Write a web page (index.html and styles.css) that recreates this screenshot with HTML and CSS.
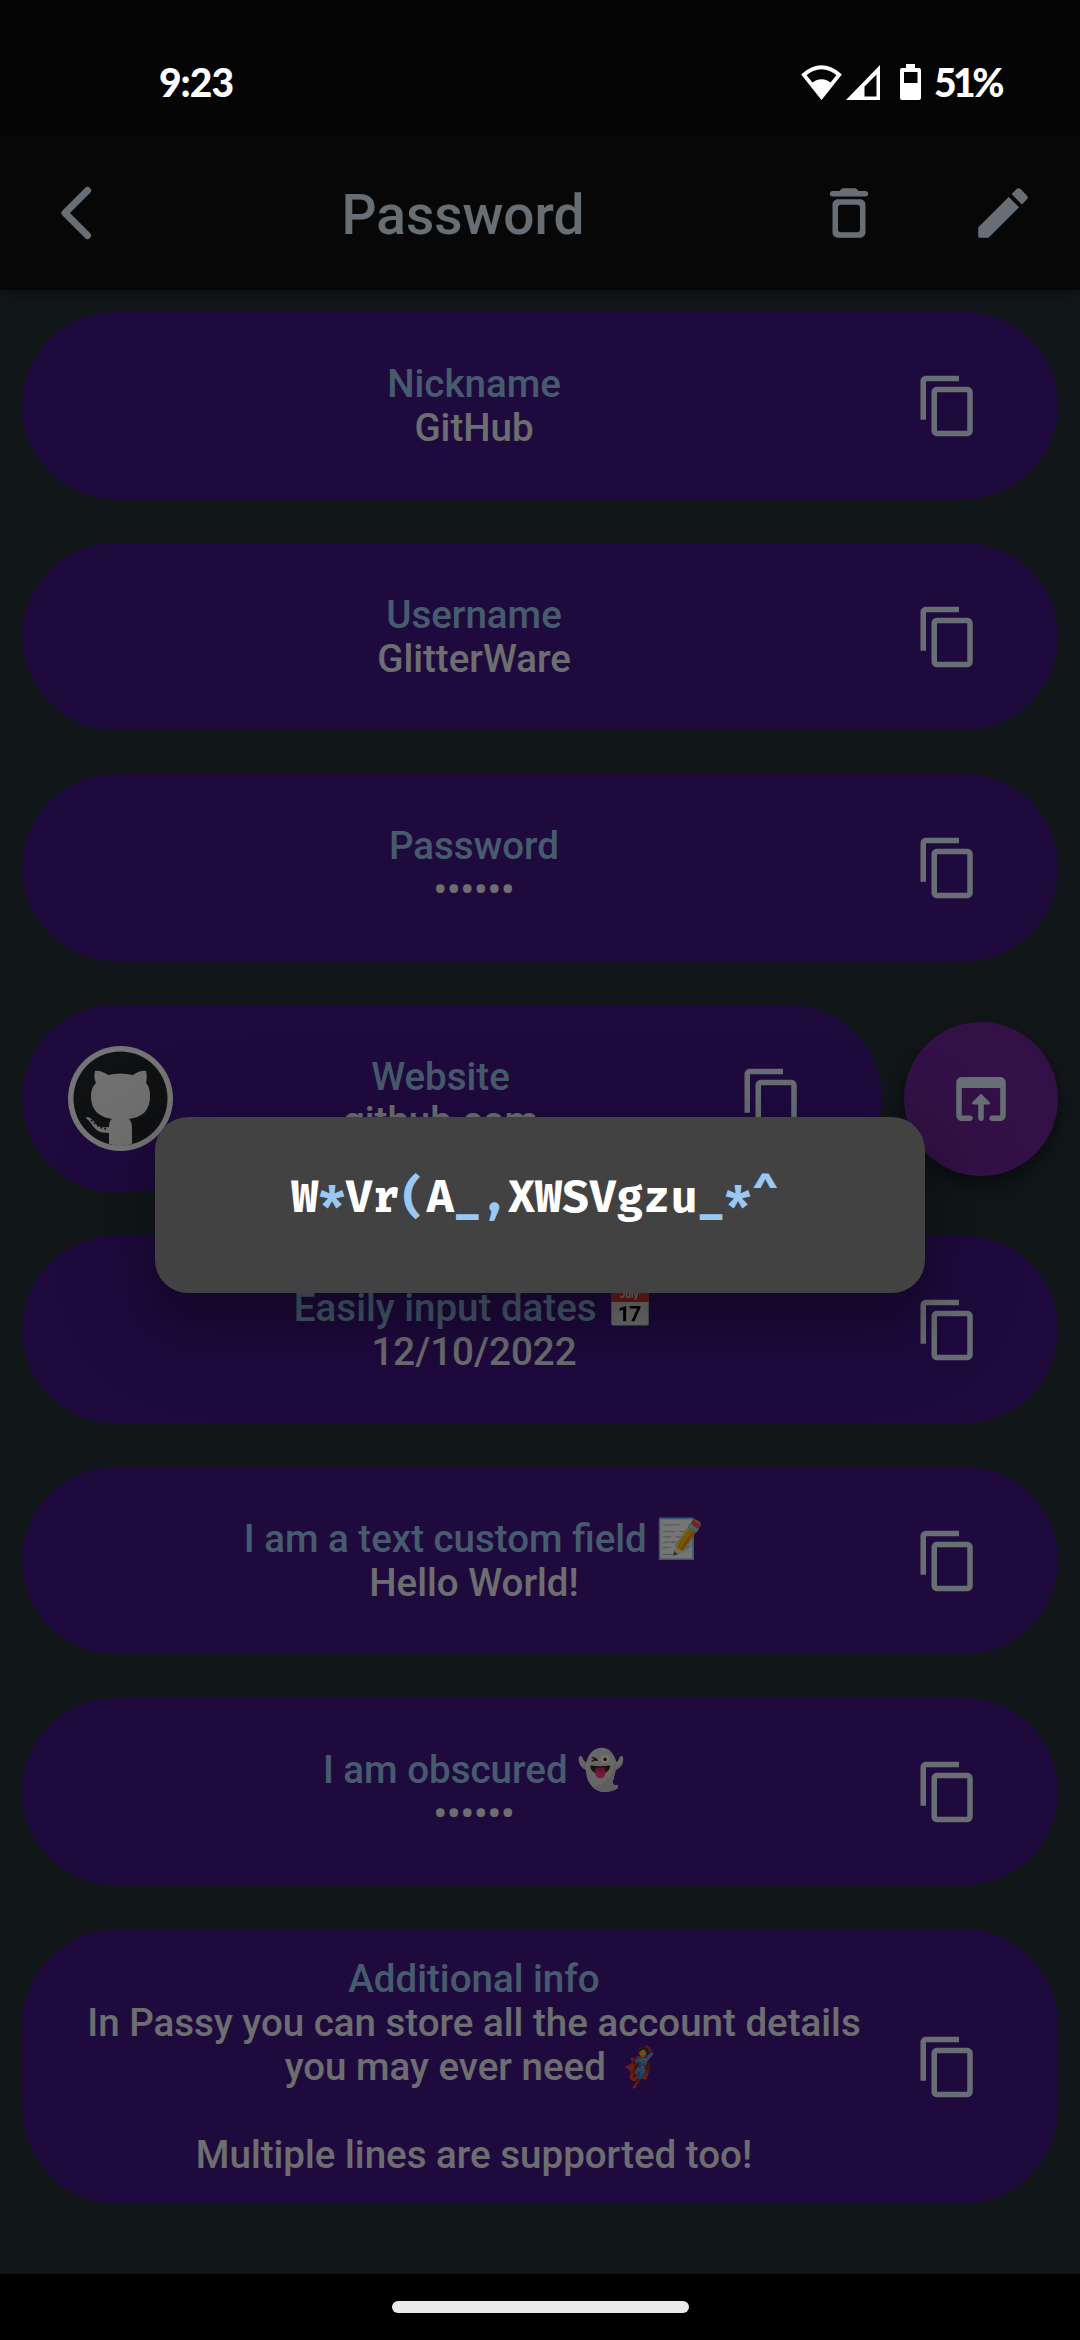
FILE: index.html
```html
<!DOCTYPE html>
<html lang="en">
<head>
<meta charset="utf-8">
<title>Password</title>
<link rel="stylesheet" href="styles.css">
</head>
<body>
<svg class="defs" aria-hidden="true">
  <symbol id="copy" viewBox="0 0 24 24"><path d="M16 1H4c-1.1 0-2 .9-2 2v14h2V3h12V1zm3 4H8c-1.1 0-2 .9-2 2v14c0 1.1.9 2 2 2h11c1.1 0 2-.9 2-2V7c0-1.1-.9-2-2-2zm0 16H8V7h11v14z"/></symbol>
</svg>
<div class="screen">
  <header class="status">
    <span class="clock">9:23</span>
    <span class="indicators">
      <svg class="wifi" viewBox="0 0 41 35"><path d="M2.8 9.8Q20.500-5.200 38.200 9.800L20.500 32Z" fill="none" stroke="#fff" stroke-width="3.800"/><path d="M10 18.500Q20.500 10 31 18.500L20.500 33Z" fill="#fff"/></svg>
      <svg class="signal" viewBox="0 0 34 35"><path fill-rule="evenodd" d="M34 0V35H0ZM30.500 9.500L18.500 21.500V31.500H30.500Z" fill="#fff"/></svg>
      <svg class="battery" viewBox="0 0 21 36"><path fill-rule="evenodd" d="M6 0h9v4h4a2 2 0 0 1 2 2v28a2 2 0 0 1-2 2H2a2 2 0 0 1-2-2V6a2 2 0 0 1 2-2h4zM4 8v11h13.500V8z" fill="#fff"/></svg>
      <span class="percent">51%</span>
    </span>
  </header>
  <nav class="appbar">
    <svg class="icon back" viewBox="0 0 66 66"><path d="M43.500 10.500L21 33l22.500 22.500" fill="none" stroke="currentColor" stroke-width="7" stroke-linecap="round" stroke-linejoin="round"/></svg>
    <h1 class="title">Password</h1>
    <div class="actions">
      <span class="action"><svg class="icon" viewBox="0 0 24 24"><path d="M6 19c0 1.100.9 2 2 2h8c1.100 0 2-.9 2-2V9c0-1.100-.9-2-2-2H8c-1.100 0-2 .9-2 2v10zm3-10h6c.55 0 1 .45 1 1v8c0 .55-.45 1-1 1H9c-.55 0-1-.45-1-1v-8c0-.55.45-1 1-1zm6.500-5l-.71-.71c-.18-.18-.44-.29-.7-.29H9.910c-.26 0-.52.11-.7.290L8.500 4H6c-.55 0-1 .45-1 1s.45 1 1 1h12c.55 0 1-.45 1-1s-.45-1-1-1h-2.500z"/></svg></span>
      <span class="action"><svg class="icon" viewBox="0 0 24 24"><path d="M3 17.460v3.040c0 .28.22.5.5.5h3.040c.13 0 .26-.05.35-.15L17.810 9.940l-3.750-3.750L3.150 17.100c-.1.100-.15.220-.15.360zM20.710 7.040c.39-.39.39-1.020 0-1.410l-2.340-2.340c-.39-.39-1.020-.39-1.410 0l-1.830 1.830 3.750 3.750 1.830-1.830z"/></svg></span>
    </div>
  </nav>
  <main class="list">
    <section class="card"><div class="text"><span class="label">Nickname</span><span>GitHub</span></div><span class="button"><svg class="icon"><use href="#copy"/></svg></span></section>
    <section class="card"><div class="text"><span class="label">Username</span><span>GlitterWare</span></div><span class="button"><svg class="icon"><use href="#copy"/></svg></span></section>
    <section class="card"><div class="text"><span class="label">Password</span><span>••••••</span></div><span class="button"><svg class="icon"><use href="#copy"/></svg></span></section>
    <div class="row">
      <section class="card">
        <svg class="favicon" viewBox="0 0 105 105">
          <circle cx="52.500" cy="52.500" r="52.500" fill="#fff"/>
          <circle cx="52.500" cy="52.500" r="47" fill="#22262a"/>
          <path fill="#f4f4f4" d="M41 98V87C31 87 27 84 23 77C21 74 18 73 18 71C23 70 26 76 30 80C34 82 38 81 41 81C41 77 42 74 44 73C32 71 23 65 23 50C23 44 25 40 28 37C26 33 26 29 27 25C31 24 37 27 40 29Q52.500 26 65 29C69 26 74 24 78 25C79 29 79 33 78 37C81 40 82 45 82 50C82 65 74 71 61 73C63 75 64 78 64 82V98Q52.500 102 41 98Z"/>
          <path d="M23 74Q31 83 40 83" fill="none" stroke="#22262a" stroke-width="1.500" stroke-dasharray="2 2"/>
        </svg>
        <div class="text"><span class="label">Website</span><span>github.com</span></div>
        <span class="button"><svg class="icon"><use href="#copy"/></svg></span>
      </section>
      <span class="fab"><svg class="icon" viewBox="0 0 24 24"><path d="M19 4H5c-1.110 0-2 .9-2 2v12c0 1.100.89 2 2 2h3c.55 0 1-.45 1-1s-.45-1-1-1H5V8h14v10h-3c-.55 0-1 .45-1 1s.45 1 1 1h3c1.100 0 2-.9 2-2V6c0-1.100-.89-2-2-2zm-7.350 6.350l-2.790 2.790c-.32.32-.1.860.35.860H11v5c0 .55.45 1 1 1s1-.45 1-1v-5h1.790c.45 0 .67-.54.35-.85l-2.790-2.790c-.19-.2-.51-.2-.7-.010z"/></svg></span>
    </div>
    <section class="card"><div class="text"><span class="label">Easily input dates 📅</span><span>12/10/2022</span></div><span class="button"><svg class="icon"><use href="#copy"/></svg></span></section>
    <section class="card"><div class="text"><span class="label">I am a text custom field 📝</span><span>Hello World!</span></div><span class="button"><svg class="icon"><use href="#copy"/></svg></span></section>
    <section class="card"><div class="text"><span class="label">I am obscured 👻</span><span>••••••</span></div><span class="button"><svg class="icon"><use href="#copy"/></svg></span></section>
    <section class="card tall"><div class="text"><span class="label">Additional info</span><span>In Passy you can store all the account details you may ever need 🦸<br><br>Multiple lines are supported too!</span></div><span class="button"><svg class="icon"><use href="#copy"/></svg></span></section>
  </main>
  <footer class="navbar"><span class="handle"></span></footer>
  <div class="scrim">
    <div class="dialog"><p class="secret">W<b>*</b>Vr<b>(</b>A<b>_,</b>XWSVgzu<b>_</b><b>*</b><b>^</b></p></div>
  </div>
</div>
</body>
</html>
```
FILE: styles.css
```css
* { box-sizing: border-box; }
body { margin: 0; background: #000; font-family: Roboto, "Noto Color Emoji", sans-serif; }
.defs { display: block; width: 0; height: 0; }
.screen { position: relative; width: 1080px; height: 2340px; display: flex; flex-direction: column; background: #263238; overflow: hidden; }

.status { height: 136px; background: #050505; color: #fff; z-index: 3; display: flex; justify-content: space-between; align-items: center; padding: 28px 77px 0 159px; font: 900 39px/1 Lato, sans-serif; }
.clock { letter-spacing: -1px; }
.indicators { display: flex; align-items: center; }
.wifi { width: 41px; height: 35px; }
.signal { width: 34px; height: 35px; margin-left: 4px; }
.battery { width: 21px; height: 36px; margin: 0 13px 0 20px; }
.percent { width: 69px; letter-spacing: -3.5px; white-space: nowrap; }

.icon { display: block; width: 66px; height: 66px; fill: currentColor; }
.appbar { height: 154px; background: #111; color: #e3f2fd; display: grid; grid-template-columns: 154px 1fr 308px; align-items: center; box-shadow: 0 4px 12px rgba(0,0,0,.35); z-index: 1; }
.back { justify-self: center; }
.title { margin: 0; padding-top: 4px; text-align: center; font-size: 55px; font-weight: 500; line-height: 64px; }
.actions { display: flex; }
.action { width: 154px; display: grid; place-items: center; }

.list { flex: 1; display: flex; flex-direction: column; gap: 44px; padding: 22px 22px 0; color: #ebeff2; }
.card { min-height: 187px; border-radius: 96px; background: #451787; display: flex; align-items: center; padding: 0 44px; }
.tall { min-height: 275px; }
.text { flex: 1; display: flex; flex-direction: column; text-align: center; font-size: 38.5px; font-weight: 500; line-height: 44px; }
.label { color: #9ac7ee; }
.button { width: 132px; display: grid; place-items: center; color: #e3f2fd; }
.row { display: flex; align-items: center; gap: 22px; }
.row .card { flex: 1; }
.favicon { width: 105px; height: 105px; margin: 0 2px; }
.fab { width: 154px; height: 154px; border-radius: 50%; background: #702598; color: #e3f2fd; display: grid; place-items: center; box-shadow: 0 8px 20px rgba(0,0,0,.45); }

.navbar { height: 66px; background: #000; z-index: 3; display: grid; place-items: center; }
.handle { width: 297px; height: 12px; border-radius: 6px; background: #eaeaea; }

.scrim { position: absolute; inset: 136px 0 66px; z-index: 2; background: rgba(0,0,0,.541); display: grid; place-items: center; }
.dialog { width: 770px; height: 176px; border-radius: 33px; background: #424242; box-shadow: 0 30px 42px 8px rgba(0,0,0,.2), 0 24px 100px 14px rgba(0,0,0,.14); display: grid; place-items: center; }
.secret { margin: 0; color: #fff; font: 700 44px/52px "Fira Code", "DejaVu Sans Mono", monospace; padding: 0 10px 13px 0; }
.secret b { color: #9ac8f5; }
```
